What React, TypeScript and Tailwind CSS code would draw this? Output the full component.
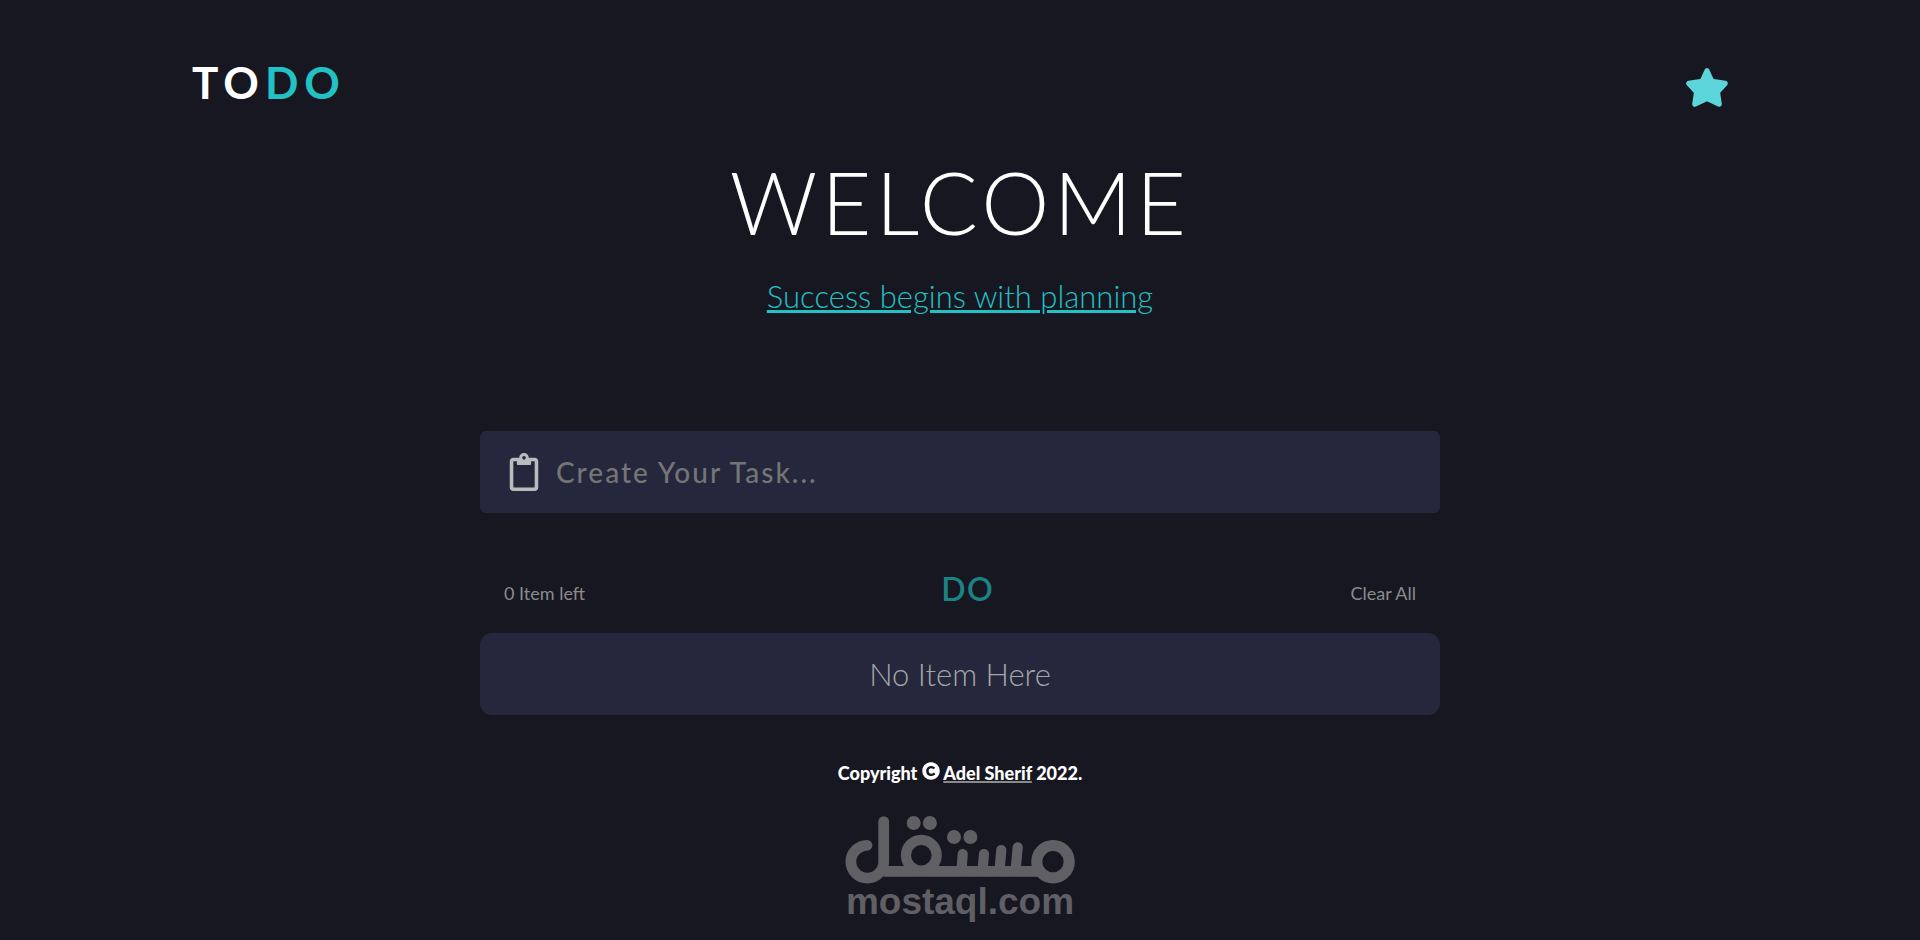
import React from "react";
import { FaCopyright, FaRegClipboard } from "react-icons/fa";

function StarIcon() {
  return (
    <svg
      className="w-[42px] h-[39px]"
      viewBox="0 0 42 39"
      fill="currentColor"
      stroke="currentColor"
      strokeWidth="5.2"
      strokeLinejoin="round"
      aria-hidden="true"
    >
      <path d="M21 2.8L25.8 13.4L39.2 15.4L31.4 24L33.2 36.2L21 30.3L8.8 36.2L10.6 24L2.8 15.4L16.2 13.4Z" />
    </svg>
  );
}

function Header() {
  return (
    <header className="flex justify-between items-center px-[10%] pt-14">
      <a href="#" className="text-[44px] leading-[52px] font-bold tracking-[6px] text-white">
        TO<span className="text-[#22c1c3]">DO</span>
      </a>
      <button aria-label="Toggle theme" className="mt-2.5 text-[#5bd5da]">
        <StarIcon />
      </button>
    </header>
  );
}

function Watermark() {
  return (
    <div className="flex flex-col items-center text-[#5f5f64]">
      <svg
        className="w-[230px] h-[68px]"
        viewBox="0 0 230 68"
        fill="none"
        stroke="currentColor"
        strokeWidth="10.8"
        strokeLinecap="round"
        aria-hidden="true"
      >
        <path d="M22 29.3A16.4 16.4 0 1 0 38.7 45.7V5.6" />
        <path d="M38.7 55.3H196" strokeLinecap="butt" />
        <circle cx="76.3" cy="39.3" r="15.4" strokeWidth="10.2" />
        <path d="M117.7 38L116.5 55M139 38L137.5 55M156.3 34L154.5 55M172.7 31.3L170.5 55" strokeWidth="10.2" />
        <circle cx="208" cy="45.7" r="16.2" strokeWidth="11.2" />
        <g fill="currentColor" stroke="none">
          <circle cx="68.7" cy="7" r="7" />
          <circle cx="84.9" cy="7" r="7" />
          <circle cx="109" cy="21" r="7" />
          <circle cx="125.4" cy="21" r="7" />
        </g>
      </svg>
      <p className="font-['Liberation_Sans',sans-serif] text-[37px] leading-9 font-bold">mostaql.com</p>
    </div>
  );
}

export default function App() {
  return (
    <div className="min-h-screen bg-[#171722] font-['Lato',sans-serif] text-white">
      <Header />
      <main className="w-1/2 mx-auto">
        <div className="text-center pt-[46px]">
          <h1 className="text-[86px] leading-[96px] font-light tracking-wider">WELCOME</h1>
          <p className="mt-[26px] text-[31px] leading-10 font-light text-[#22c1c3] underline decoration-[3px] underline-offset-2">
            Success begins with planning
          </p>
        </div>

        <form className="flex items-center gap-4 mt-[115px] h-[82px] px-7 rounded-md bg-[#25273c]">
          <label htmlFor="task" aria-label="Create Your Task">
            <FaRegClipboard className="w-8 h-[38px] text-[#b9bcbd]" />
          </label>
          <input
            id="task"
            type="text"
            placeholder="Create Your Task..."
            className="flex-1 bg-transparent text-[28px] font-medium tracking-[2px] outline-none placeholder:text-[#757575]"
          />
        </form>

        <div className="flex justify-between items-end px-6 mt-14 text-[#8b8b8b]">
          <p className="text-lg leading-8">0 Item left</p>
          <h2 className="text-[32px] leading-10 font-semibold tracking-wider text-[#1b8285]">DO</h2>
          <button className="text-lg leading-8">Clear All</button>
        </div>

        <div className="flex items-center justify-center mt-6 h-[82px] rounded-xl bg-[#25273c] text-[31px] font-light text-[#a3a7a9]">
          No Item Here
        </div>
      </main>

      <footer className="flex flex-col items-center gap-7 mt-11">
        <p className="text-lg leading-7 font-black">
          Copyright <FaCopyright className="inline size-[18px] mb-2" />{" "}
          <a href="#" className="underline decoration-[#8b8b8b] decoration-2">
            Adel Sherif
          </a>{" "}
          2022.
        </p>
        <Watermark />
      </footer>
    </div>
  );
}
